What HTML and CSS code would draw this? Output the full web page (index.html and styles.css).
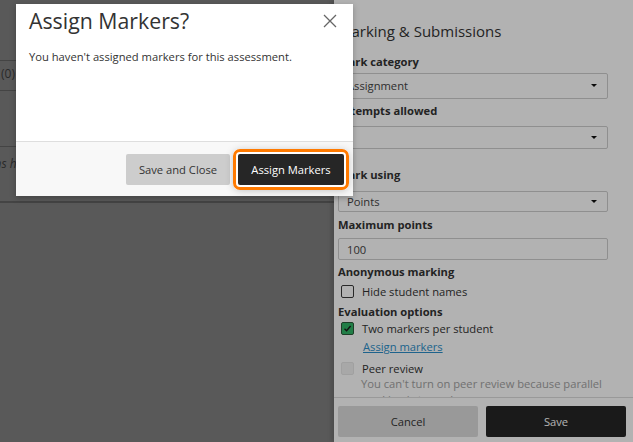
FILE: index.html
```html
<!DOCTYPE html>
<html lang="en">
<head>
    <meta charset="UTF-8" />
    <title>Assign Markers</title>
    <link rel="stylesheet" href="styles.css">
</head>
<body>
<div class="screen">
    <main class="course">
        <div class="course-row row-top"></div>
        <div class="course-row row-count"><span>(0) submitted</span></div>
        <div class="course-row row-empty"><span class="empty-note">Submissions here</span></div>
        <div class="course-row row-last"></div>
    </main>

    <aside class="panel">
        <div class="panel-body">
            <h2>Marking &amp; Submissions</h2>

            <div class="field-label gap-11">Mark category</div>
            <div class="select sel-1"><span>Assignment</span><i class="caret"></i></div>

            <div class="field-label gap-4">Attempts allowed</div>
            <div class="select sel-2"><span>1</span><i class="caret"></i></div>

            <div class="field-label gap-18">Mark using</div>
            <div class="select sel-3"><span>Points</span><i class="caret"></i></div>

            <div class="field-label gap-5">Maximum points</div>
            <div class="text-input">100</div>

            <div class="field-label gap-4">Anonymous marking</div>
            <div class="check-row gap-3"><span class="box"></span>Hide student names</div>

            <div class="field-label gap-5">Evaluation options</div>
            <div class="check-row">
                <span class="box checked">
                    <svg width="9" height="9" viewBox="0 0 9 9"><path d="M1.5 4.8 L3.6 6.8 L7.6 2" fill="none" stroke="#1a1a1a" stroke-width="1.4"/></svg>
                </span>Two markers per student
            </div>
            <div class="link-row"><a href="#">Assign markers</a></div>
            <div class="check-row disabled gap-5"><span class="box"></span>Peer review</div>
            <div class="helper">You can't turn on peer review because parallel<br>marking is turned on.</div>
        </div>
        <div class="panel-footer">
            <button class="btn btn-cancel">Cancel</button>
            <button class="btn btn-save">Save</button>
        </div>
    </aside>

    <div class="backdrop"></div>

    <div class="modal">
        <div class="modal-head">
            <h1>Assign Markers?</h1>
            <button class="close" aria-label="Close">
                <svg width="14" height="14" viewBox="0 0 14 14"><path d="M1 1 L13 13 M13 1 L1 13" stroke="#666" stroke-width="1.3" fill="none"/></svg>
            </button>
        </div>
        <div class="modal-body">You haven't assigned markers for this assessment.</div>
        <div class="modal-foot">
            <button class="btn btn-light">Save and Close</button>
            <button class="btn btn-dark focused">Assign Markers</button>
        </div>
    </div>
</div>
</body>
</html>
```

FILE: styles.css
```css
body {
    margin: 0;
    font-family: "Open Sans", Arial, sans-serif;
    color: #333;
}
.screen {
    position: relative;
    width: 633px;
    height: 442px;
    overflow: hidden;
    display: flex;
}

/* page behind the panel, already dimmed */
.course {
    width: 334px;
    flex: none;
    background-color: #808080;
    font-size: 12px;
    color: #3c3c3c;
}
.course-row {
    border-bottom: 1px solid #626262;
}
.row-top {
    height: 60px;
}
.row-count {
    height: 29px;
    line-height: 25px;
    padding-left: 1px;
}
.row-empty {
    height: 54px;
    margin-top: 55px;
    border-top: 1px solid #626262;
    line-height: 34px;
    white-space: nowrap;
}
.empty-note {
    font-style: italic;
    display: inline-block;
    text-indent: -59px;
}
.row-last {
    height: 0;
}

/* side panel */
.panel {
    flex: 1;
    display: flex;
    flex-direction: column;
    background-color: #fff;
    box-shadow: -3px 0 4px rgba(0, 0, 0, 0.15);
}
.panel-body {
    height: 397px;
    overflow: hidden;
    padding: 19px 25px 0 4px;
    box-sizing: border-box;
}
h2 {
    margin: 0;
    font-size: 15px;
    font-weight: 500;
    line-height: 24px;
    color: #333;
}
.field-label {
    font-size: 11.2px;
    font-weight: 700;
    line-height: 16px;
    color: #333;
}
.gap-3 { margin-top: 3px; }
.gap-4 { margin-top: 4px; }
.gap-5 { margin-top: 5px; }
.gap-11 { margin-top: 11px; }
.gap-18 { margin-top: 18px; }

.select, .text-input {
    display: flex;
    align-items: center;
    justify-content: space-between;
    box-sizing: border-box;
    border: 1px solid #cdcdcd;
    border-radius: 2px;
    padding: 0 10px 0 8px;
    font-size: 11.2px;
    color: #444;
}
.sel-1 { height: 26px; margin-top: 3px; padding-bottom: 2px; }
.sel-2 { height: 23px; margin-top: 7px; }
.sel-2 span { visibility: hidden; }
.sel-3 { height: 21px; margin-top: 8px; }
.text-input { height: 22px; margin-top: 5px; }
.caret {
    width: 0;
    height: 0;
    border-left: 3px solid transparent;
    border-right: 3px solid transparent;
    border-top: 3px solid #111;
}

.check-row {
    display: flex;
    align-items: center;
    height: 16px;
    padding-left: 3px;
    font-size: 11.2px;
    color: #333;
}
.box {
    width: 13px;
    height: 13px;
    box-sizing: border-box;
    border: 1px solid #3c3c3c;
    border-radius: 2px;
    margin-right: 8px;
    display: flex;
    align-items: center;
    justify-content: center;
}
.box.checked {
    background-color: #30b566;
    border-color: #2a5a3a;
}
.check-row.disabled .box {
    background-color: #f1f1f1;
    border-color: #e6e6e6;
}
.link-row {
    margin-top: 3px;
    padding-left: 25px;
    height: 16px;
    font-size: 11.2px;
}
.link-row a {
    color: #2c8fc9;
}
.helper {
    padding-left: 23px;
    font-size: 11.2px;
    line-height: 16px;
    color: #a2a2a2;
    white-space: nowrap;
}
.panel-footer {
    flex: 1;
    border-top: 1px solid #dcdcdc;
    display: flex;
    gap: 8px;
    padding: 8px 7px 0 4px;
}
.btn {
    font-family: "Open Sans", Arial, sans-serif;
    font-size: 11.2px;
    border: none;
    border-radius: 2px;
    height: 31px;
    cursor: pointer;
}
.panel-footer .btn {
    flex: 1;
}
.btn-cancel {
    background-color: #dcdcdc;
    color: #333;
}
.btn-save {
    background-color: #262626;
    color: #fff;
}

/* dialog on top */
.backdrop {
    position: absolute;
    inset: 0;
    background-color: rgba(0, 0, 0, 0.3);
}
.modal {
    position: absolute;
    left: 16px;
    top: 4px;
    width: 337px;
    height: 192px;
    background-color: #fff;
    display: flex;
    flex-direction: column;
    box-shadow: 0 2px 6px rgba(0, 0, 0, 0.25);
}
.modal-head {
    display: flex;
    justify-content: space-between;
    align-items: center;
    padding: 2px 16px 0 13px;
}
h1 {
    margin: 0;
    font-size: 21.3px;
    font-weight: 400;
    line-height: 30px;
    color: #333;
}
.close {
    border: none;
    background: none;
    padding: 0;
    width: 14px;
    height: 14px;
    display: flex;
}
.modal-body {
    flex: 1;
    padding: 12px 13px 0;
    font-size: 11.2px;
    line-height: 17px;
    color: #333;
}
.modal-foot {
    height: 55px;
    box-sizing: border-box;
    border-top: 1px solid #dedede;
    background-color: #f8f8f8;
    display: flex;
    justify-content: flex-end;
    align-items: center;
    gap: 8px;
    padding: 0 9px 0 0;
}
.btn-light {
    background-color: #cdcdcd;
    color: #333;
    width: 104px;
}
.btn-dark {
    background-color: #262626;
    color: #fff;
    width: 106px;
}
.focused {
    outline: 3px solid #ff7a00;
    outline-offset: 2px;
    box-shadow: 0 0 0 5px #fff, 0 1px 8px 4px rgba(0, 0, 0, 0.25);
}
```
